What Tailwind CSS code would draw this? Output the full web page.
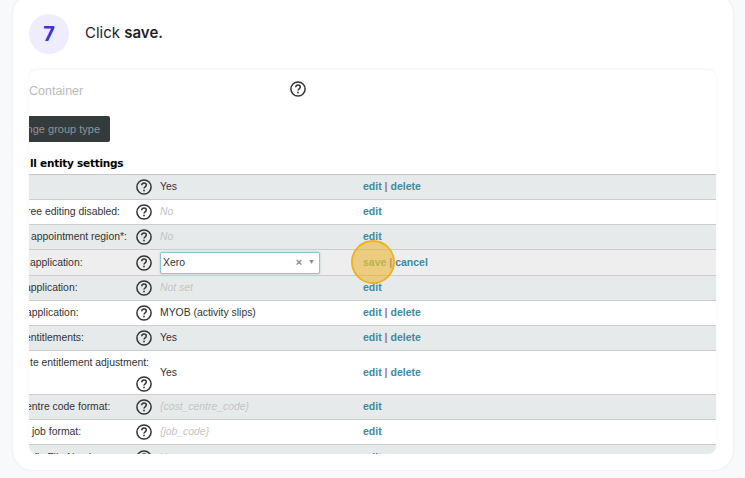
<!DOCTYPE html>
<html lang="en">
<head>
    <meta charset="UTF-8">
    <title>Click save</title>
    <script src="https://cdn.jsdelivr.net/npm/@tailwindcss/browser@4"></script>
</head>
<body class="bg-[#f8f9fb] h-[478px] overflow-hidden font-['Liberation_Sans',sans-serif]">
    <svg class="hidden">
        <symbol id="help" viewBox="0 0 16 16">
            <circle cx="8" cy="8" r="7.1" fill="none" stroke="#333" stroke-width="1.5"/>
            <path d="M5.7 6.2c0-1.4 1-2.2 2.3-2.2s2.3.8 2.3 2c0 1.9-2.3 1.8-2.3 3.6" fill="none" stroke="#333" stroke-width="1.5"/>
            <rect x="7.2" y="10.7" width="1.6" height="1.6" fill="#333"/>
        </symbol>
    </svg>

    <!-- Step card -->
    <div class="mx-[13px] -mt-[6px] h-[476px] w-[720px] rounded-[20px] bg-white shadow-[0_0_3px_rgba(0,0,0,0.08)] pt-[20px] pl-[16px] pr-[17px]">
        <div class="flex items-center gap-[16px] h-[40px]">
            <div class="w-[40px] h-[40px] rounded-full bg-[#eeedff] flex items-center justify-center text-[#4431d4] text-[20px] font-bold font-['Inter',sans-serif]">7</div>
            <p class="text-[15px] text-[#1c1c28] font-['Inter',sans-serif] -mt-[2px]">Click <b class="font-semibold">save.</b></p>
        </div>

        <!-- Screenshot inside the step -->
        <div class="relative mt-[16px] h-[384px] overflow-hidden rounded-[8px] bg-white shadow-[0_-1px_3px_rgba(0,0,0,0.05)] text-[10.4px] text-[#333]">
            <div class="flex h-[40px] items-center">
                <span class="w-[107px] text-[12.5px] text-[#bbb] mt-[2px]">Container</span>
                <svg class="w-[16px] h-[16px] ml-[154px] -mt-[2px]"><use href="#help"/></svg>
            </div>
            <div class="mt-[6px] flex h-[26px] w-[81px] items-center justify-end rounded-r-[2px] bg-[#343b3c] pr-[10px] text-[11px] text-[#8f9494] overflow-hidden whitespace-nowrap">nge group type</div>
            <div class="mt-[14px] h-[18px] pl-[1px] text-[10.5px] font-bold text-black font-['DejaVu_Sans',sans-serif] tracking-[-0.25px]">ll entity settings</div>

            <div class="border-t border-[#c8c8c8]">
                <div class="flex items-center h-[25px] bg-[#e7eaea] border-b border-[#ccc]">
                    <span class="w-[107px]"></span>
                    <svg class="w-[16px] h-[16px]"><use href="#help"/></svg>
                    <span class="w-[211px] pl-[8px]">Yes</span>
                    <span class="text-[#3f8b9c] font-bold text-[10.5px]">edit <span class="text-[#8f6fa0]">|</span> delete</span>
                </div>
                <div class="flex items-center h-[25px] bg-white border-b border-[#ccc]">
                    <span class="w-[109px] -ml-[2px] whitespace-nowrap">ree editing disabled:</span>
                    <svg class="w-[16px] h-[16px]"><use href="#help"/></svg>
                    <span class="w-[211px] pl-[8px] italic text-[#c4c4c4]">No</span>
                    <span class="text-[#3f8b9c] font-bold text-[10.5px]">edit</span>
                </div>
                <div class="flex items-center h-[25px] bg-[#e7eaea] border-b border-[#ccc]">
                    <span class="w-[107px] pl-[2px] whitespace-nowrap">appointment region*:</span>
                    <svg class="w-[16px] h-[16px]"><use href="#help"/></svg>
                    <span class="w-[211px] pl-[8px] italic text-[#c4c4c4]">No</span>
                    <span class="text-[#3f8b9c] font-bold text-[10.5px]">edit</span>
                </div>
                <div class="flex items-center h-[26px] bg-[#eeeeee] border-b border-[#ccc]">
                    <span class="w-[107px] pl-[1px] whitespace-nowrap">application:</span>
                    <svg class="w-[16px] h-[16px]"><use href="#help"/></svg>
                    <span class="w-[211px] pl-[8px]">
                        <span class="flex h-[22px] w-[160px] items-center justify-between rounded-[2px] border border-[#8cc5d0] bg-white pl-[2px] pr-[4px] shadow-[0_0_2px_rgba(63,139,156,0.4)]">
                            Xero
                            <span class="flex items-center gap-[6px] text-[#888] font-bold"><span class="text-[11px]">×</span><span class="text-[7px]">▼</span></span>
                        </span>
                    </span>
                    <span class="text-[#3f8b9c] font-bold text-[10.5px]"><span class="text-[#7fb07a]">save</span> <span class="text-[#8f6fa0]">|</span> cancel</span>
                </div>
                <div class="flex items-center h-[25px] bg-[#e7eaea] border-b border-[#ccc]">
                    <span class="w-[111px] -ml-[4px] whitespace-nowrap">application:</span>
                    <svg class="w-[16px] h-[16px]"><use href="#help"/></svg>
                    <span class="w-[211px] pl-[8px] italic text-[#c4c4c4]">Not set</span>
                    <span class="text-[#3f8b9c] font-bold text-[10.5px]">edit</span>
                </div>
                <div class="flex items-center h-[25px] bg-white border-b border-[#ccc]">
                    <span class="w-[110px] -ml-[3px] whitespace-nowrap">application:</span>
                    <svg class="w-[16px] h-[16px]"><use href="#help"/></svg>
                    <span class="w-[211px] pl-[8px]">MYOB (activity slips)</span>
                    <span class="text-[#3f8b9c] font-bold text-[10.5px]">edit <span class="text-[#8f6fa0]">|</span> delete</span>
                </div>
                <div class="flex items-center h-[25px] bg-[#e7eaea] border-b border-[#ccc]">
                    <span class="w-[111px] -ml-[4px] whitespace-nowrap">entitlements:</span>
                    <svg class="w-[16px] h-[16px]"><use href="#help"/></svg>
                    <span class="w-[211px] pl-[8px]">Yes</span>
                    <span class="text-[#3f8b9c] font-bold text-[10.5px]">edit <span class="text-[#8f6fa0]">|</span> delete</span>
                </div>
                <div class="flex h-[44px] bg-white border-b border-[#ccc]">
                    <div class="w-[123px] pt-[4px]">
                        <div class="whitespace-nowrap pl-[1px]">te entitlement adjustment:</div>
                        <svg class="w-[16px] h-[16px] ml-[107px] mt-[5px]"><use href="#help"/></svg>
                    </div>
                    <span class="w-[211px] pl-[8px] pt-[14px]">Yes</span>
                    <span class="text-[#3f8b9c] font-bold text-[10.5px] pt-[14px]">edit <span class="text-[#8f6fa0]">|</span> delete</span>
                </div>
                <div class="flex items-center h-[25px] bg-[#e7eaea] border-b border-[#ccc]">
                    <span class="w-[110px] -ml-[3px] whitespace-nowrap">entre code format:</span>
                    <svg class="w-[16px] h-[16px]"><use href="#help"/></svg>
                    <span class="w-[211px] pl-[8px] italic text-[#c4c4c4]">{cost_centre_code}</span>
                    <span class="text-[#3f8b9c] font-bold text-[10.5px]">edit</span>
                </div>
                <div class="flex items-center h-[25px] bg-white border-b border-[#ccc]">
                    <span class="w-[107px] pl-[3px] whitespace-nowrap">job format:</span>
                    <svg class="w-[16px] h-[16px]"><use href="#help"/></svg>
                    <span class="w-[211px] pl-[8px] italic text-[#c4c4c4]">{job_code}</span>
                    <span class="text-[#3f8b9c] font-bold text-[10.5px]">edit</span>
                </div>
                <div class="flex items-center h-[25px] bg-[#e7eaea]">
                    <span class="w-[107px] pl-[5px] whitespace-nowrap">fic File Number:</span>
                    <svg class="w-[16px] h-[16px]"><use href="#help"/></svg>
                    <span class="w-[211px] pl-[8px] italic text-[#c4c4c4]">Yes</span>
                    <span class="text-[#3f8b9c] font-bold text-[10.5px]">edit</span>
                </div>
            </div>

            <!-- Highlight over the save link -->
            <div class="absolute left-[322px] top-[170px] h-[44px] w-[44px] rounded-full border-[2.5px] border-[#ebb326] bg-[#ebb326]/55"></div>
        </div>
    </div>
</body>
</html>
